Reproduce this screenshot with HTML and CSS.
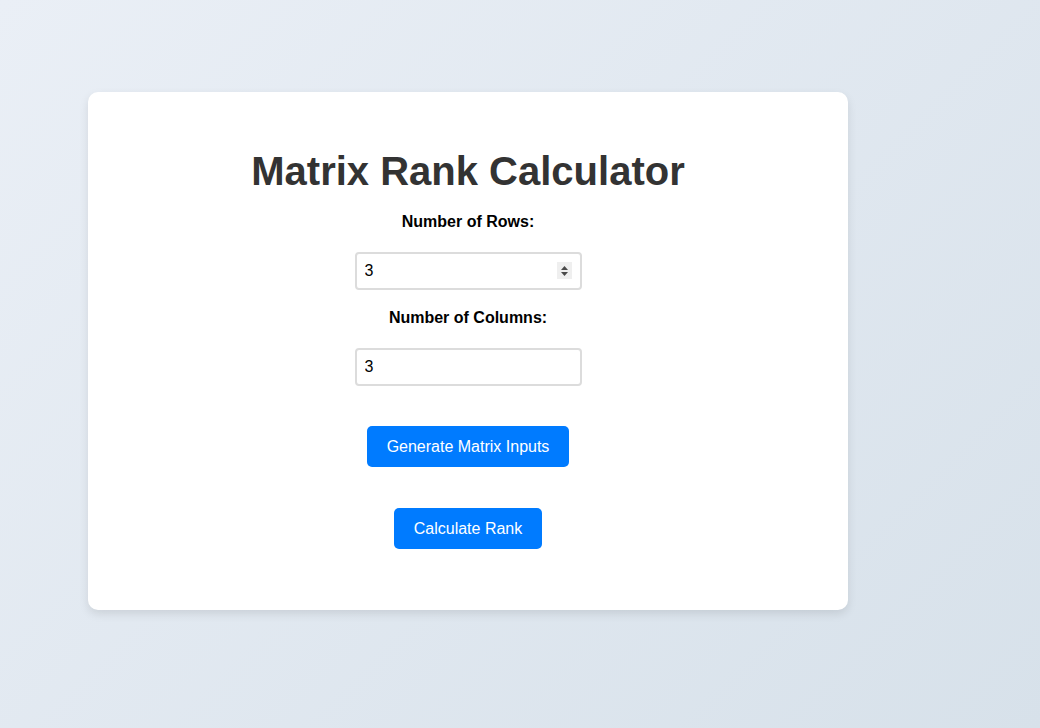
FILE: index.html
```html
<!DOCTYPE html>
<html lang="en">
<head>
<meta charset="utf-8">
<title>Matrix Rank Calculator</title>
<link rel="stylesheet" href="styles.css">
</head>
<body>
  <main class="card">
    <h1 class="title">Matrix Rank Calculator</h1>
    <div class="field">
      <label class="field-label" for="rows">Number of Rows:</label>
      <div class="input-wrap">
        <input class="field-input" id="rows" type="text" value="3">
        <span class="spinner" aria-hidden="true">
          <svg width="15" height="17" viewBox="0 0 15 17">
            <rect width="15" height="17" fill="#efefef"/>
            <path d="M4 8 L7.5 4 L11 8 Z" fill="#4a4a4a"/>
            <path d="M4 10 L7.5 14 L11 10 Z" fill="#4a4a4a"/>
          </svg>
        </span>
      </div>
    </div>
    <div class="field">
      <label class="field-label" for="cols">Number of Columns:</label>
      <div class="input-wrap">
        <input class="field-input" id="cols" type="text" value="3">
      </div>
    </div>
    <button class="btn btn-generate" type="button">Generate Matrix Inputs</button>
    <div class="matrix"></div>
    <button class="btn btn-calc" type="button">Calculate Rank</button>
  </main>
</body>
</html>
```

FILE: styles.css
```css
html, body {
  margin: 0;
  height: 100%;
}

body {
  background: linear-gradient(135deg, #eaeff6 0%, #d7e1ea 100%);
  font-family: "Liberation Sans", Arial, sans-serif;
  padding: 92px 0 0 88px;
  box-sizing: border-box;
}

.card {
  width: 760px;
  box-sizing: border-box;
  background: #fff;
  border-radius: 10px;
  box-shadow: 0 4px 10px rgba(0, 0, 0, 0.1);
  padding: 56px 40px 61px;
  display: flex;
  flex-direction: column;
  align-items: center;
}

.title {
  margin: 0 0 19px;
  font-size: 40px;
  line-height: 46px;
  font-weight: bold;
  color: #333;
}

.field {
  display: flex;
  flex-direction: column;
  align-items: center;
  margin-bottom: 19px;
}

.field-label {
  font-size: 16px;
  line-height: 18px;
  font-weight: bold;
  color: #000;
  margin-bottom: 21px;
}

.input-wrap {
  position: relative;
}

.field-input {
  display: block;
  width: 227px;
  height: 38px;
  box-sizing: border-box;
  padding: 8px;
  border: 2px solid #dcdcdc;
  border-radius: 4px;
  font-family: "Liberation Sans", Arial, sans-serif;
  font-size: 16px;
  color: #000;
  background: #fff;
  outline: none;
}

.spinner {
  position: absolute;
  right: 10px;
  top: 10px;
  width: 15px;
  height: 17px;
  display: block;
}

.spinner svg {
  display: block;
}

.btn {
  background: #007bff;
  color: #fff;
  border: none;
  border-radius: 5px;
  font-family: "Liberation Sans", Arial, sans-serif;
  font-size: 16px;
  line-height: 19px;
  padding: 11px 20px;
  cursor: pointer;
}

.btn-generate {
  margin-top: 21px;
}

.matrix {
  height: 41px;
}
```
